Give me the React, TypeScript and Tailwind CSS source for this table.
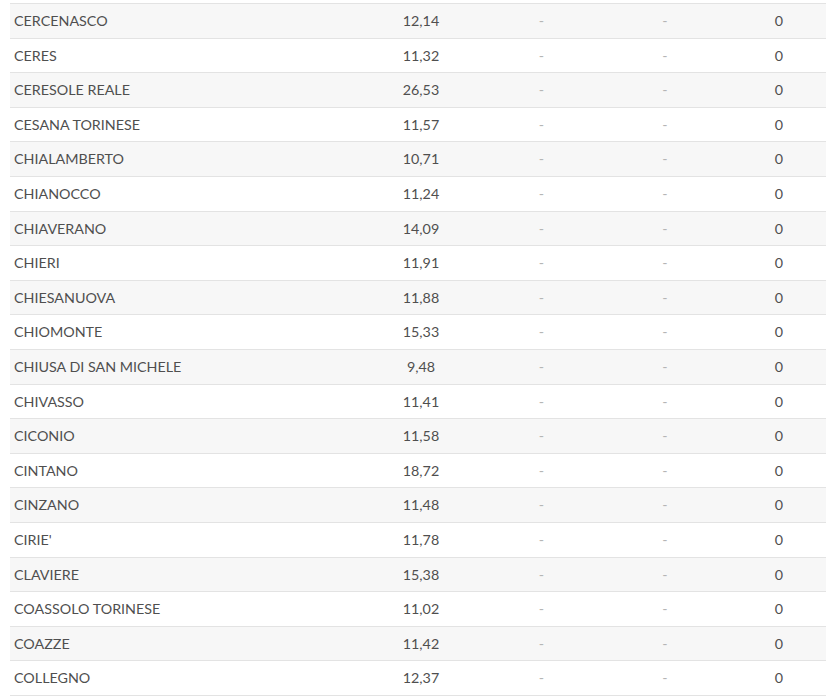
const rows: [string, string][] = [
  ["CERCENASCO", "12,14"],
  ["CERES", "11,32"],
  ["CERESOLE REALE", "26,53"],
  ["CESANA TORINESE", "11,57"],
  ["CHIALAMBERTO", "10,71"],
  ["CHIANOCCO", "11,24"],
  ["CHIAVERANO", "14,09"],
  ["CHIERI", "11,91"],
  ["CHIESANUOVA", "11,88"],
  ["CHIOMONTE", "15,33"],
  ["CHIUSA DI SAN MICHELE", "9,48"],
  ["CHIVASSO", "11,41"],
  ["CICONIO", "11,58"],
  ["CINTANO", "18,72"],
  ["CINZANO", "11,48"],
  ["CIRIE'", "11,78"],
  ["CLAVIERE", "15,38"],
  ["COASSOLO TORINESE", "11,02"],
  ["COAZZE", "11,42"],
  ["COLLEGNO", "12,37"],
];

export default function App() {
  return (
    <div className="h-[696px] w-[828px] overflow-hidden bg-white pt-[3px] pl-[10px] pr-[2px] font-['Lato','Liberation_Sans',sans-serif] text-[14.3px] text-[#4f4f4f]">
      <div className="border-t border-[#e3e3e3]">
        {rows.map(([name, value], i) => (
          <div
            key={name}
            className={`grid h-[34.6px] grid-cols-[350px_120px_123px_124px_1fr] items-center border-b border-[#e3e3e3] ${
              i % 2 === 0 ? "bg-[#f7f7f7]" : "bg-white"
            }`}
          >
            <span className="pl-[4px]">{name}</span>
            <span className="pl-[2px] text-center">{value}</span>
            <span className="text-center text-[#b5b5b5]">-</span>
            <span className="text-center text-[#b5b5b5]">-</span>
            <span className="pl-[5px] text-center">0</span>
          </div>
        ))}
      </div>
    </div>
  );
}
